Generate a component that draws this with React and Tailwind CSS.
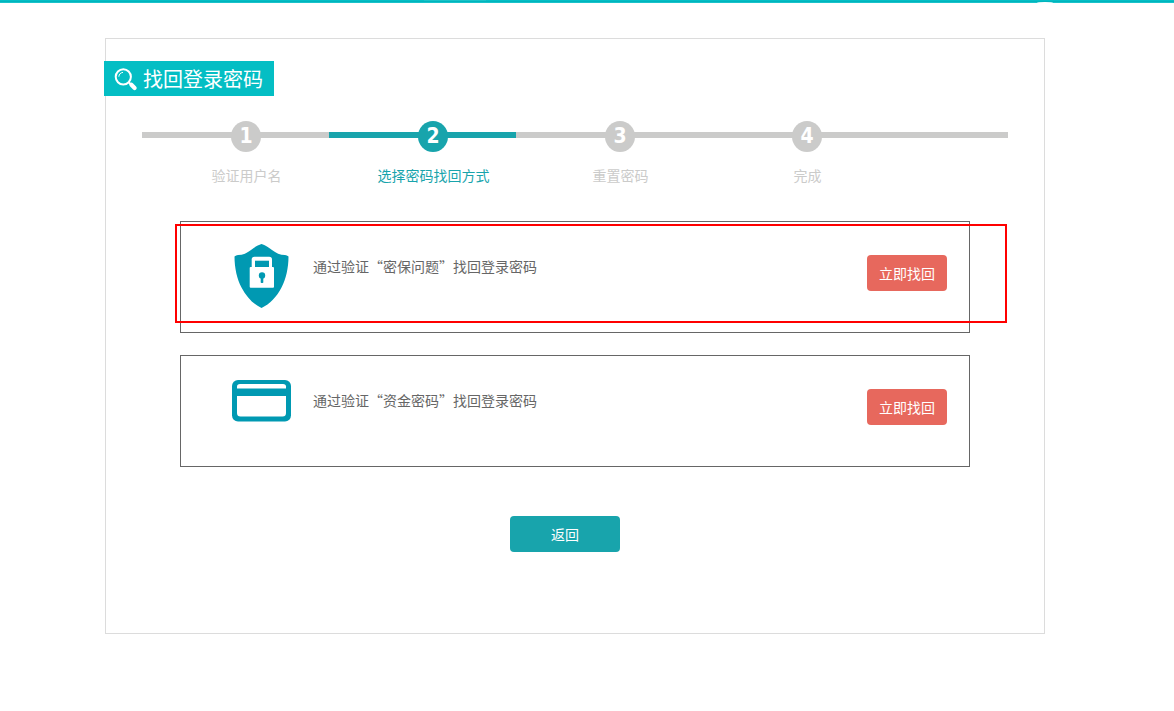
const FONT = "font-['Noto_Sans_CJK_SC',sans-serif]";

const steps = [
  { label: '验证用户名', width: 'w-[187px]' },
  { label: '选择密码找回方式', width: 'w-[187px]', active: true },
  { label: '重置密码', width: 'w-[187px]' },
  { label: '完成', width: 'w-[305px]' },
];

function SearchIcon() {
  return (
    <svg width="24" height="24" viewBox="0 0 24 24" fill="none" stroke="#fff" className="shrink-0">
      <circle cx="9.3" cy="9.8" r="7.6" strokeWidth="2" />
      <path d="M4.8 9.7C5 7.3 6.6 5.6 9 5.4" strokeWidth="1" />
      <path d="M14.6 15.1l2.6 2.6" strokeWidth="2" />
      <path d="M17.4 17.7l3.2 3.2" strokeWidth="4.2" strokeLinecap="round" />
    </svg>
  );
}

function ShieldIcon() {
  return (
    <svg width="56" height="66" viewBox="0 0 56 66">
      <path
        d="M27.5 1C31 2 35 4.500 38 7c4 3 8 5 13 5q2 0 3.500 1.500C54.500 25 52 36 47.500 44.500 42.500 54 36 61 27.500 65 19 61 12.500 54 7.500 44.500 3 36 .5 25 .5 13.500Q2 12 4 12c5 0 9-2 13-5 3-2.500 7-5 10.500-6z"
        fill="#0099b2"
      />
      <path d="M17.7 25V16.500q0-2.800 2.800-2.800H35.200q2.800 0 2.800 2.800V25" fill="#fff" />
      <path d="M21 17.700h14v6.500H21z" fill="#0099b2" />
      <rect x="15.7" y="24" width="24.3" height="20.8" rx="1" fill="#fff" />
      <circle cx="28" cy="32.5" r="3.2" fill="#0099b2" />
      <path d="M26.7 34h2.600v5.500q-1.300 1-2.600 0z" fill="#0099b2" />
    </svg>
  );
}

function CardIcon() {
  return (
    <svg width="60" height="42" viewBox="0 0 60 42">
      <rect width="59" height="41.5" rx="6" fill="#0099b2" />
      <path d="M5 8.500V6.500q0-2.500 3-2.500h43q3 0 3 2.500v2z" fill="#fff" />
      <path d="M5 16h49v17q0 3.500-3.500 3.500h-42Q5 36.500 5 33z" fill="#fff" />
    </svg>
  );
}

function Method({ icon, text }) {
  return (
    <div className="flex h-[112px] items-start border border-[#666]">
      <div className="w-[132px] pl-[51px]">{icon}</div>
      <p className="flex-1 pt-[34px] text-sm leading-5 text-[#666]">{text}</p>
      <button className="mt-[33px] mr-[22px] h-9 w-20 rounded bg-[#e7685d] text-sm leading-none text-white">
        立即找回
      </button>
    </div>
  );
}

export default function App() {
  return (
    <div className={`h-[711px] overflow-hidden bg-white ${FONT}`}>
      <div className="flex h-[3px] flex-col justify-end bg-[#04bec6]">
        <svg width="1174" height="3" className="block">
          <path d="M0 1.500H1174" stroke="#00b4bc" />
          <path d="M424 .5H486" stroke="#4fcdd0" strokeWidth=".3" />
          <path d="M0 2.500H1174" stroke="#4fd0d5" strokeWidth=".3" />
          <ellipse cx="1045" cy="3" rx="8" ry="1" fill="#fff" />
        </svg>
      </div>
      <main className="relative mt-[35px] ml-[105px] h-[596px] w-[940px] border border-[#dcdcdc]">
        <h1 className="mt-[22px] -ml-0.5 flex h-[35px] w-[170px] items-center bg-[#04bec4] pt-px pl-2.5 text-xl leading-none text-white">
          <SearchIcon />
          <span className="-mt-px ml-[5px] whitespace-nowrap">找回登录密码</span>
        </h1>
        <ol className="mt-[25px] ml-9 flex h-[100px]">
          {steps.map((step, i) => (
            <li key={step.label} className={step.width}>
              <div
                className={`mt-[11px] flex h-1.5 items-center pt-[3px] pl-[89px] ${
                  step.active ? 'bg-[#18a4ac]' : 'bg-[#cbcbca]'
                }`}
              >
                <span
                  className={`flex h-[31px] w-[30px] shrink-0 items-center justify-center rounded-[50%] pb-px font-['DejaVu_Sans_Condensed','DejaVu_Sans',sans-serif] text-[21px] leading-none font-bold text-white [font-stretch:condensed] ${
                    step.active ? 'bg-[#18a4ac]' : 'bg-[#cbcbca]'
                  }`}
                >
                  {i + 1}
                </span>
              </div>
              <p
                className={`mt-[27px] ml-[22px] w-[165px] text-center text-sm leading-5 ${
                  step.active ? 'text-[#18a4ac]' : 'text-[#cbcbca]'
                }`}
              >
                {step.label}
              </p>
            </li>
          ))}
        </ol>
        <section className="ml-[74px] flex w-[790px] flex-col gap-[22px]">
          <Method
            icon={<div className="pt-[21px] pl-0.5"><ShieldIcon /></div>}
            text="通过验证“密保问题”找回登录密码"
          />
          <Method
            icon={<div className="pt-6"><CardIcon /></div>}
            text="通过验证“资金密码”找回登录密码"
          />
        </section>
        <button className="mt-[49px] ml-[404px] block h-9 w-[110px] rounded bg-[#18a4ac] text-sm leading-none text-white">
          返回
        </button>
        <div className="pointer-events-none absolute top-[185px] left-[69px] h-[99px] w-[832px] border-2 border-[#f00]" />
      </main>
    </div>
  );
}
